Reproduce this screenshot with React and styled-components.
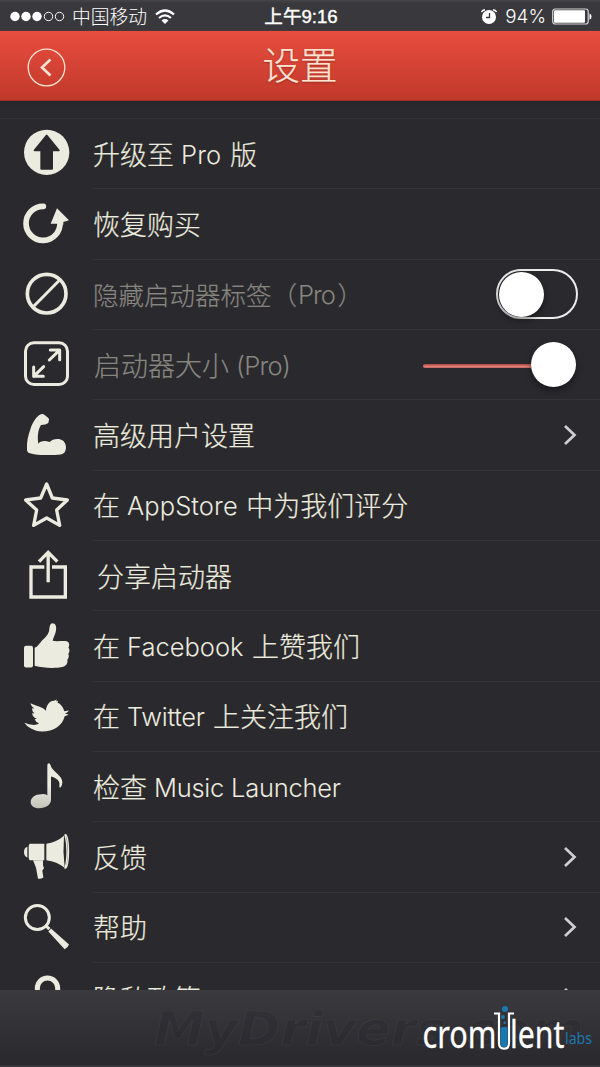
import React, { useState } from 'react';
import styled, { createGlobalStyle } from 'styled-components';

const cream = '#ecebdf';

const GlobalStyle = createGlobalStyle`
  * { box-sizing: border-box; }
  body {
    margin: 0;
    background: #2a292e;
    font-family: Inter, "Noto Sans CJK SC", sans-serif;
  }
`;

const Screen = styled.div`
  width: 600px;
  height: 1067px;
  display: flex;
  flex-direction: column;
  overflow: hidden;
  background: #2a292e;
`;

const StatusBar = styled.div`
  flex: none;
  height: 31px;
  display: grid;
  grid-template-columns: 1fr auto 1fr;
  align-items: center;
  padding: 2px 8px 0 10px;
  background: linear-gradient(#46454a 0, #39383d 3px, #39383d 29px, #4a3437 31px);
  color: #fff;
`;

const StatusGroup = styled.div`
  display: flex;
  align-items: center;
  justify-content: ${({ $end }) => ($end ? 'flex-end' : 'flex-start')};
`;

const Carrier = styled.span`
  margin: -1px 8px 0 7px;
  font: 300 18.8px/28px "Noto Sans CJK SC", sans-serif;
`;

const Time = styled.span`
  font: 400 18.6px/28px "Liberation Sans", "Noto Sans CJK SC", sans-serif;
  -webkit-text-stroke: 0.4px #fff;
`;

const Percent = styled.span`
  margin: 0 6px 0 8px;
  font: 300 18.8px/28px Inter, sans-serif;
`;

const Header = styled.header`
  flex: none;
  height: 70px;
  display: grid;
  grid-template-columns: 1fr auto 1fr;
  align-items: center;
  padding: 0 27px;
  background: linear-gradient(#e84d3e, #c1392b);
  border-bottom: 1px solid #9c3229;
`;

const BackButton = styled.button`
  width: 39px;
  height: 39px;
  margin-top: 3px;
  padding: 0;
  border: none;
  background: none;
  cursor: pointer;
  svg { display: block; }
`;

const Title = styled.h1`
  margin: 0 0 5px;
  font: 300 37.5px/50px "Noto Sans CJK SC", sans-serif;
  color: #fbe3d3;
  -webkit-text-stroke: 0.25px #fbe3d3;
  text-shadow: 0 1px 2px rgba(80, 0, 0, 0.4);
`;

const List = styled.div`
  flex: 1;
  min-height: 0;
  overflow: hidden;
  background: linear-gradient(#262529, #2a292e 5px);
`;

const ListTop = styled.div`
  height: 18px;
  border-bottom: 1px solid #323136;
`;

const Row = styled.div`
  height: 70.35px;
  display: flex;
  padding-left: 24px;
`;

const IconSlot = styled.div`
  flex: none;
  width: 69px;
  display: flex;
  align-items: center;
  svg {
    display: block;
    overflow: visible;
  }
`;

const RowBody = styled.div`
  flex: 1;
  display: flex;
  align-items: center;
  justify-content: space-between;
  padding: 0 23px 0 ${({ $indent }) => $indent || 0}px;
  border-bottom: 1px solid #343338;
`;

const Label = styled.span`
  height: 40px;
  white-space: pre;
  font: 300 ${({ $size }) => $size || 27}px/40px "Noto Sans CJK SC", sans-serif;
  color: ${({ $dim }) => ($dim ? '#87867f' : cream)};
  -webkit-text-stroke: 0.2px currentColor;
`;

const Latin = styled.span`
  margin: 0 2.5px 0 1px;
  font-family: Inter, sans-serif;
  font-size: 25.5px;
  font-weight: 300;
  line-height: 0;
  vertical-align: 1px;
  letter-spacing: ${({ $gap }) => $gap || 0}px;
  -webkit-text-stroke: 0;
`;

const Toggle = styled.button`
  width: 82px;
  height: 50px;
  margin-right: -1px;
  padding: 1px;
  display: flex;
  justify-content: ${({ $on }) => ($on ? 'flex-end' : 'flex-start')};
  border: 2px solid #ececec;
  border-radius: 25px;
  background: transparent;
`;

const Knob = styled.span`
  flex: none;
  width: 45px;
  height: 45px;
  border-radius: 50%;
  background: #fff;
  box-shadow: 0 3px 7px rgba(0, 0, 0, 0.45);
`;

const Slider = styled.div`
  width: 153px;
  margin-right: 1px;
  display: flex;
  align-items: center;
`;

const Track = styled.div`
  flex: 1;
  height: 4px;
  margin-top: 3px;
  border-radius: 4px 0 0 4px;
  background: linear-gradient(#a8423f, #e07f78 60%, #c26660);
`;

const Footer = styled.footer`
  position: relative;
  flex: none;
  height: 77px;
  display: flex;
  justify-content: flex-end;
  padding: 10px 6px 0 0;
  background: linear-gradient(#3b3a3f, #29282d);
  border-bottom: 2px solid #38373c;
`;

const Watermark = styled.svg`
  position: absolute;
  left: 150px;
  top: 10px;
`;

const LogoSvg = styled.svg`
  position: relative;
  overflow: visible;
`;

const Icon = ({ y, children }) => (
  <svg width="46" height="54" viewBox={`72 ${y} 138 162`} fill={cream} stroke="none">{children}</svg>
);

const Upgrade = () => (
  <Icon y={20}>
    <circle cx="140" cy="96" r="68" />
    <path d="M140 46 L176 90 H156 V145 H124 V90 H104 Z" fill="#2a292e" stroke="#2a292e" strokeWidth="6" strokeLinejoin="round" />
  </Icon>
);

const Restore = () => (
  <Icon y={231}>
    <path d="M130 256 A51 51 0 1 0 180 304" fill="none" stroke={cream} strokeWidth="17" strokeLinecap="round" />
    <path d="M171 262 L207 298 L190 303 V311 L171 308 L152 308 Z" />
  </Icon>
);

const Hide = () => (
  <Icon y={442}>
    <g fill="none" stroke={cream}>
      <circle cx="140" cy="519" r="58" strokeWidth="11" />
      <path d="M179 478 L102 556" strokeWidth="9" />
    </g>
  </Icon>
);

const Resize = () => (
  <Icon y={38}>
    <g fill="none" stroke={cream} strokeWidth="9" strokeLinejoin="round" strokeLinecap="round">
      <rect x="76.500" y="52.500" width="126" height="125" rx="25" />
      <path d="M148 104 L178 75 M151 74 H179 V103" />
      <path d="M131 124 L101 153 M101 125 V153 H130" />
    </g>
  </Icon>
);

const Muscle = () => (
  <Icon y={249}>
    <path d="M125 264 Q130 263 134 267 L145 276 Q149 280 146 286 L145 291 Q138 297 123 297 C113 312 112 336 115 353 C120 345 135 342 149 348 C157 339 175 336 187 343 C199 350 201 369 194 379 C187 388 171 387 148 387 C121 388 100 386 85 380 Q80 378 81 369 C80 348 84 329 93 304 C99 288 109 273 118 267 Z" />
  </Icon>
);

const Star = () => (
  <Icon y={460}>
    <path d="M140 475 L157 517 L202 523 L170 553 L179 599 L140 577 L101 599 L110 553 L77 523 L122 517 Z" fill="none" stroke={cream} strokeWidth="10" strokeLinejoin="round" />
  </Icon>
);

const Share = () => (
  <Icon y={41}>
    <g fill="none" stroke={cream} strokeWidth="10">
      <path d="M133 95 H93 V185 H196 V95 H156" />
      <path d="M144.500 141 V51 M117 79 L144.500 51 L172 79" />
    </g>
  </Icon>
);

const Like = () => (
  <Icon y={252.5}>
    <rect x="72" y="330" width="27" height="65" rx="6" />
    <path d="M104 336 C113 333 119 322 126 314 C135 305 144 298 147 286 C149 274 149 262 157 262 C167 262 170 272 168 284 C166 296 159 307 158 315 C174 318 192 313 202 317 C209 320 209 331 205 335 C210 340 209 349 205 354 C208 361 206 368 202 372 C204 383 199 389 190 393 C165 399 130 397 104 390 Z" />
  </Icon>
);

const Twitter = () => (
  <Icon y={463.5}>
    <path d="M73 562 Q88 569 106 568 Q113 567 117 563 Q107 560 104 551 L111 550 Q98 545 96 533 L103 534 Q95 524 96 518 L103 519 Q93 512 91 503 Q107 509 119 514 Q132 519 138 526 C138 510 150 495 162 496 L171 492 L168 497 L175 496 L172 501 Q187 507 193 527 L207 525 Q202 532 195 534 L206 538 Q201 541 194 542 C187 571 161 588 126 588 C102 587 84 577 73 562 Z" />
  </Icon>
);

const Music = () => (
  <Icon y={44.5}>
    <defs>
      <linearGradient id="note" x1="0" y1="0" x2="0" y2="1">
        <stop offset="0.5" stopColor={cream} />
        <stop offset="1" stopColor="#c4c3bb" />
      </linearGradient>
    </defs>
    <path d="M142 60 Q142 54 147 54 C151 54 152 61 154 66 C164 82 187 92 187 111 Q187 120 182 127 Q176 128 178 122 C182 108 168 97 153 94 V164 C153 178 139 189 117 189 C101 189 92 181 92 171 C92 157 105 147 124 147 Q135 146 142 150 Z" fill="url(#note)" />
  </Icon>
);

const Megaphone = () => (
  <Icon y={255.6}>
    <path d="M82 303 Q72 306 72 319 Q72 331 82 335 Z M89 294 H133 V343 H89 Q86 340 86 335 V302 Q86 297 89 294 Z" />
    <path d="M139 294 Q169 290 192 270 Q188 318 194 366 Q171 347 139 343 Z" />
    <path d="M195 267 C209 262 209 371 195 367 C203 340 203 296 195 267 Z" fill="none" stroke={cream} strokeWidth="4" />
    <path d="M99 343 H129 V358 L132 367 L127 374 L130 395 Q124 400 114 399 L111 382 Q109 364 104 355 Z" />
  </Icon>
);

const Search = () => (
  <Icon y={466.6}>
    <g fill="none" stroke={cream}>
      <circle cx="112" cy="516" r="36" strokeWidth="9" />
      <path d="M138 541 L148 551" strokeWidth="9" />
    </g>
    <path d="M153 549 L207 597 Q204 606 194 611 L145 558 Z" />
  </Icon>
);

const Lock = () => (
  <Icon y={62.7}>
    <path d="M112 135 V114 A30 30 0 0 1 173 114 V135" fill="none" stroke={cream} strokeWidth="15" />
  </Icon>
);

const Chevron = () => (
  <svg width="14" height="22" viewBox="0 0 14 22" fill="none" stroke="#cfcfd1" strokeWidth="2.700">
    <path d="M2 2 L11.500 11 L2 20" />
  </svg>
);

const rows = [
  { icon: Upgrade, text: '升级至 |Pro| 版', gap: 0.2 },
  { icon: Restore, text: '恢复购买' },
  { icon: Hide, text: '隐藏启动器标签（|Pro|）', dim: true, size: 25.5, gap: -1, control: 'toggle' },
  { icon: Resize, text: '启动器大小 |(Pro)', dim: true, indent: 1, gap: -0.7, control: 'slider' },
  { icon: Muscle, text: '高级用户设置', control: 'chevron' },
  { icon: Star, text: '在 |AppStore| 中为我们评分', gap: 0.1 },
  { icon: Share, text: '分享启动器', indent: 4 },
  { icon: Like, text: '在 |Facebook| 上赞我们' },
  { icon: Twitter, text: '在 |Twitter| 上关注我们', gap: -0.3 },
  { icon: Music, text: '检查 |Music Launcher', gap: -0.25 },
  { icon: Megaphone, text: '反馈', control: 'chevron' },
  { icon: Search, text: '帮助', control: 'chevron' },
  { icon: Lock, text: '隐私政策', control: 'chevron' },
];

function SettingRow({ row }) {
  const [on, setOn] = useState(false);
  const RowIcon = row.icon;
  return (
    <Row>
      <IconSlot><RowIcon /></IconSlot>
      <RowBody $indent={row.indent}>
        <Label $dim={row.dim} $size={row.size}>
          {row.text.split('|').map((part, i) => (i % 2 ? <Latin key={i} $gap={row.gap}>{part}</Latin> : part))}
        </Label>
        {row.control === 'toggle' && <Toggle $on={on} onClick={() => setOn(!on)}><Knob /></Toggle>}
        {row.control === 'slider' && <Slider><Track /><Knob /></Slider>}
        {row.control === 'chevron' && <Chevron />}
      </RowBody>
    </Row>
  );
}

const Signal = () => (
  <svg width="55" height="12" viewBox="0 0 55 12" fill="#fff">
    {[5, 16, 27].map((x) => <circle key={x} cx={x} cy="5.500" r="4.700" />)}
    {[38.5, 49.5].map((x) => <circle key={x} cx={x} cy="5.500" r="4.200" fill="none" stroke="#fff" />)}
  </svg>
);

const Wifi = () => (
  <svg width="20" height="16" viewBox="0 0 20 16" fill="none" stroke="#fff" strokeWidth="2.200">
    <path d="M1 5.500 Q10 -2.500 19 5.500 M4 9 Q10 3.800 16 9" />
    <path d="M6.500 11.500 Q10 8.700 13.500 11.500 L10 15 Z" fill="#fff" stroke="none" />
  </svg>
);

const Alarm = () => (
  <svg width="16" height="16" viewBox="0 0 16 16" fill="none" stroke="#fff">
    <circle cx="8" cy="8" r="7" fill="#fff" stroke="none" />
    <path d="M0.500 3.200 Q1 1.200 4 0.700 M15.500 3.200 Q15 1.200 12 0.700" strokeWidth="1.400" />
    <path d="M8.500 4 V8.500 H5" stroke="#39383d" strokeWidth="1.300" />
  </svg>
);

const Battery = () => (
  <svg width="40" height="17" viewBox="0 0 40 17">
    <rect x="0.700" y="1" width="35.500" height="15" rx="2.500" fill="none" stroke="#d5d5d7" strokeWidth="1.200" />
    <rect x="2" y="2.300" width="31" height="12.400" rx="1" fill="#fff" />
    <path d="M37.500 5.500 Q39.500 6 39.500 8.500 Q39.500 11 37.500 11.500 Z" fill="#fff" />
  </svg>
);

const Logo = () => (
  <LogoSvg width="172" height="56" viewBox="422 1000 172 56" fontFamily="'Noto Sans', sans-serif">
    <g fill="#fff" stroke="#fff" strokeWidth="0.300" fontSize="39">
      <text x="422.500" y="1047.500" textLength="74" lengthAdjust="spacingAndGlyphs">crom</text>
      <text x="510" y="1047.500" textLength="54.500" lengthAdjust="spacingAndGlyphs">lent</text>
    </g>
    <path d="M494 1013.500 H499 V1043 Q499 1048.700 504 1048.700 Q509 1048.700 509 1043 V1013.500 H514" fill="none" stroke="#fff" strokeWidth="2.200" />
    <path d="M500.400 1028 Q504 1026 507.600 1027.500 V1043 Q507.600 1047.300 504 1047.300 Q500.400 1047.300 500.400 1043 Z" fill="#1b78ae" />
    <g fill="#1b78ae">
      <circle cx="505" cy="1009" r="3" />
      <circle cx="503" cy="1017" r="1.900" />
      <circle cx="504.700" cy="1022.700" r="1.300" />
    </g>
    <text x="565" y="1043.500" textLength="27" lengthAdjust="spacingAndGlyphs" fontSize="16" fill="#1b78ae">labs</text>
  </LogoSvg>
);

function App() {
  return (
    <Screen>
      <GlobalStyle />
      <StatusBar>
        <StatusGroup>
          <Signal />
          <Carrier>中国移动</Carrier>
          <Wifi />
        </StatusGroup>
        <Time>上午9:16</Time>
        <StatusGroup $end>
          <Alarm />
          <Percent>94%</Percent>
          <Battery />
        </StatusGroup>
      </StatusBar>
      <Header>
        <BackButton>
          <svg width="39" height="39" viewBox="0 0 39 39" fill="none" stroke="#fbe3d3">
            <circle cx="19.500" cy="19.500" r="18.300" strokeWidth="1.300" />
            <path d="M23.500 11.500 L15 19.500 L23.500 27.500" strokeWidth="2.600" />
          </svg>
        </BackButton>
        <Title>设置</Title>
      </Header>
      <List>
        <ListTop />
        {rows.map((row) => <SettingRow key={row.text} row={row} />)}
      </List>
      <Footer>
        <Watermark width="444" height="60" viewBox="0 0 444 60">
          <text x="4" y="44.500" textLength="430" lengthAdjust="spacingAndGlyphs" fontFamily="'DejaVu Sans', sans-serif" fontWeight="700" fontStyle="italic" fontSize="47" fill="#29282d" fillOpacity="0.3" stroke="#515056" strokeOpacity="0.4" strokeWidth="0.600">MyDrivers.com</text>
        </Watermark>
        <Logo />
      </Footer>
    </Screen>
  );
}

export default App;
